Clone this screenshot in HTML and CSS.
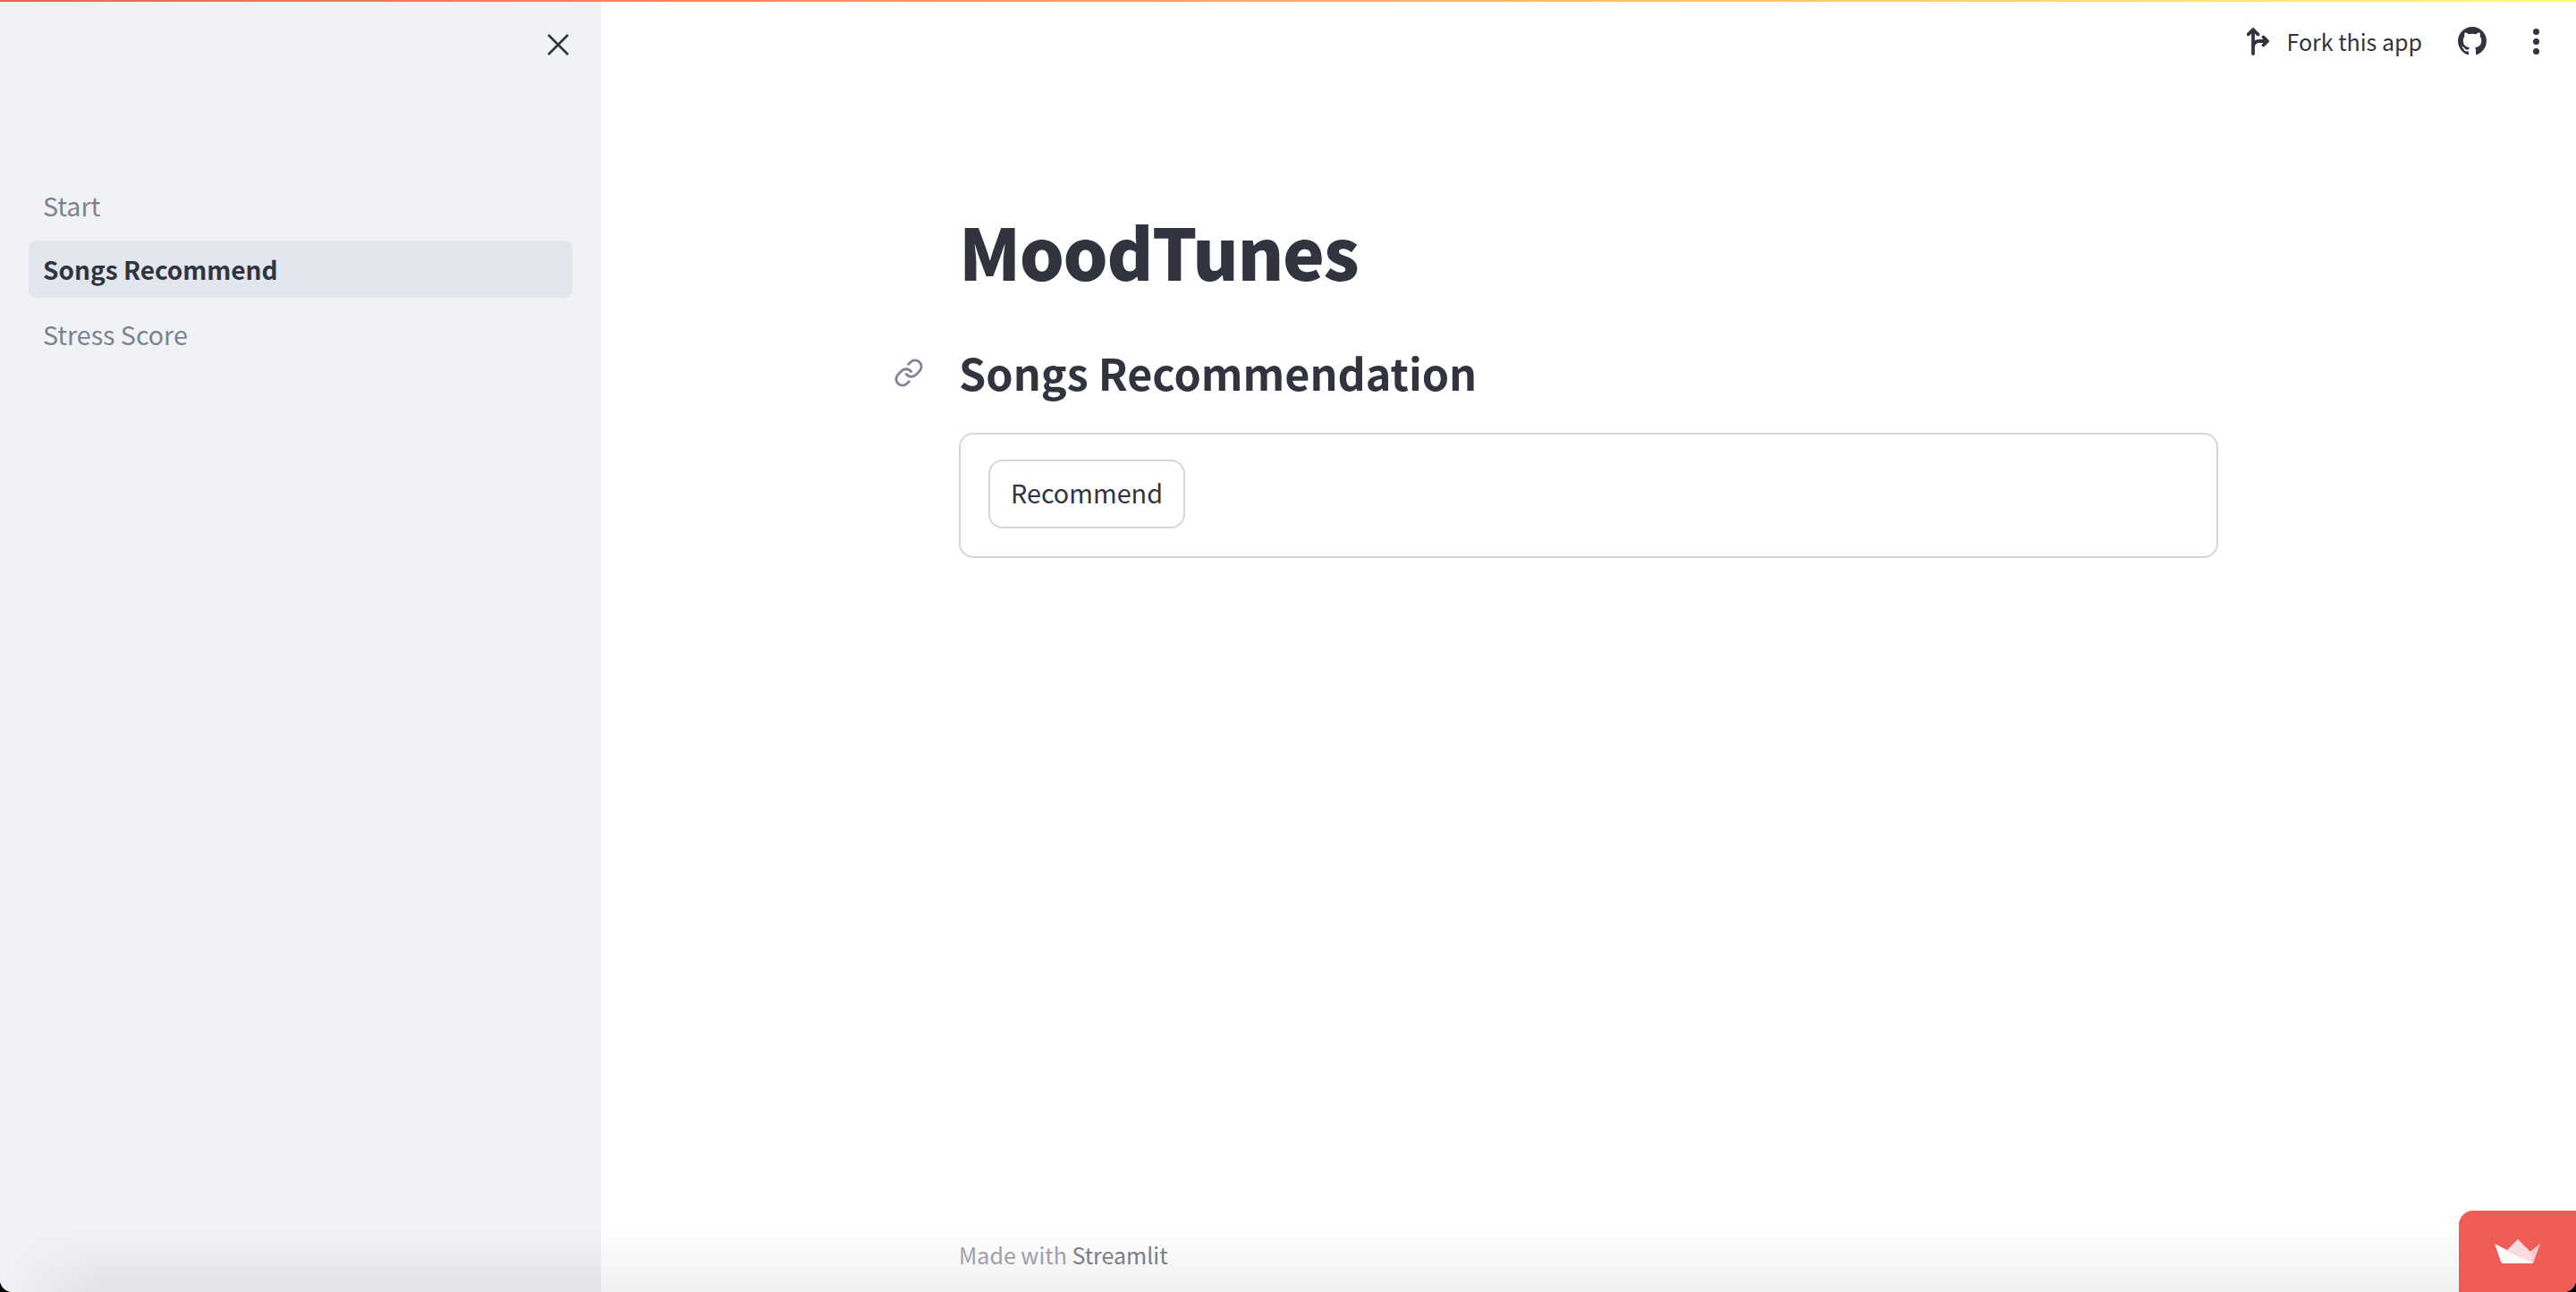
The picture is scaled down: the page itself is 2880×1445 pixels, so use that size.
FILE: index.html
```html
<!DOCTYPE html>
<html lang="en">
<head>
    <meta charset="UTF-8">
    <title>MoodTunes</title>
    <link rel="stylesheet" href="styles.css">
</head>
<body>
    <div class="app">
        <div class="top-line"></div>
        <div class="columns">
            <aside class="sidebar">
                <div class="sidebar-head">
                    <svg class="close-icon" viewBox="0 0 24 24" fill="none" stroke="#31333f" stroke-width="2.6"><path d="M1 1L23 23M23 1L1 23"/></svg>
                </div>
                <nav class="nav">
                    <a class="nav-item">Start</a>
                    <a class="nav-item active">Songs Recommend</a>
                    <a class="nav-item">Stress Score</a>
                </nav>
            </aside>
            <main class="main">
                <header class="toolbar">
                    <div class="fork">
                        <svg class="fork-icon" viewBox="0 0 26 32" fill="none" stroke="#31333f" stroke-width="3.8" stroke-linecap="round" stroke-linejoin="round"><path d="M7 30V3M1.5 8.5L7 3L12.500 8.500M7 23C7 18 10 16 14 16H22M18.500 11.500L23 16L18.500 20.500"/></svg>
                        <span>Fork this app</span>
                    </div>
                    <svg class="github-icon" viewBox="0 0 16 16" fill="#31333f"><path d="M8 0C3.580 0 0 3.580 0 8c0 3.540 2.290 6.530 5.470 7.590.4.070.55-.17.55-.38 0-.19-.01-.82-.01-1.490-2.010.37-2.530-.49-2.690-.94-.09-.23-.48-.94-.82-1.130-.28-.15-.68-.52-.01-.53.63-.01 1.080.58 1.230.82.72 1.210 1.870.87 2.330.66.070-.52.280-.87.510-1.070-1.780-.2-3.640-.89-3.640-3.950 0-.87.310-1.590.820-2.150-.08-.2-.36-1.020.08-2.120 0 0 .67-.21 2.200.82.640-.18 1.320-.27 2-.27s1.360.09 2 .27c1.530-1.040 2.200-.82 2.200-.82.440 1.100.160 1.920.080 2.120.510.560.820 1.270.820 2.150 0 3.070-1.870 3.750-3.650 3.950.290.250.540.730.540 1.480 0 1.070-.010 1.930-.010 2.200 0 .21.150.46.550.38A8.010 8.010 0 0 0 16 8c0-4.420-3.580-8-8-8z"/></svg>
                    <div class="dots"><i></i><i></i><i></i></div>
                </header>
                <section class="content">
                    <h1 class="title">MoodTunes</h1>
                    <h2 class="subtitle">
                        <svg class="link-icon" viewBox="0 0 24 24" fill="none" stroke="#808495" stroke-width="2" stroke-linecap="round" stroke-linejoin="round"><path d="M10 13a5 5 0 0 0 7.540.54l3-3a5 5 0 0 0-7.070-7.070l-1.720 1.710"/><path d="M14 11a5 5 0 0 0-7.540-.54l-3 3a5 5 0 0 0 7.070 7.070l1.710-1.710"/></svg>
                        Songs Recommendation
                    </h2>
                    <div class="card">
                        <button class="btn" type="button">Recommend</button>
                    </div>
                </section>
                <footer class="footer">Made with <span class="footer-link">Streamlit</span></footer>
            </main>
        </div>
        <div class="bottom-shade"></div>
        <div class="badge">
            <svg class="boat" viewBox="0 0 52 28">
                <path fill="#f8c6cd" d="M26 24L51 5L43 27Z"/>
                <path fill="#fadbe2" d="M26 0L40 14L43 27L14 12Z"/>
                <path fill="#fdfafa" d="M0 5L43 27H9Q8 27 7 25Z"/>
            </svg>
        </div>
    </div>
</body>
</html>
```

FILE: styles.css
```css
html, body {
    margin: 0;
    padding: 0;
    height: 100%;
    background: #000;
    overflow: hidden;
}
body {
    font-family: "Noto Sans CJK SC", "Noto Sans", sans-serif;
    color: #31333f;
}
.app {
    position: relative;
    height: 100vh;
    display: flex;
    flex-direction: column;
    background: #fff;
    border-radius: 0 0 14px 14px;
    overflow: hidden;
}
.top-line {
    height: 2px;
    flex: none;
    background: linear-gradient(90deg, #f0605a, #fff27f 98%);
}
.columns {
    flex: 1;
    display: flex;
    min-height: 0;
}
.sidebar {
    width: 672px;
    flex: none;
    background: #f0f2f6;
    padding: 0 32px;
    box-sizing: border-box;
}
.sidebar-head {
    height: 195px;
    display: flex;
    justify-content: flex-end;
    padding: 36px 4px 0 0;
    box-sizing: border-box;
}
.close-icon {
    width: 24px;
    height: 24px;
}
.nav {
    display: flex;
    flex-direction: column;
    gap: 8px;
}
.nav-item {
    height: 64px;
    display: flex;
    align-items: center;
    padding-left: 16px;
    border-radius: 8px;
    font-size: 28.6px;
    color: #7f818c;
}
.nav-item.active {
    background: #e2e7ef;
    color: #31333f;
    font-size: 28px;
    font-weight: 700;
}
.main {
    flex: 1;
    min-width: 0;
    display: flex;
    flex-direction: column;
}
.toolbar {
    display: flex;
    justify-content: flex-end;
    align-items: center;
    height: 88px;
    padding-right: 41px;
    box-sizing: border-box;
}
.fork {
    display: flex;
    align-items: center;
    gap: 18px;
    font-size: 25px;
}
.fork-icon {
    width: 26px;
    height: 32px;
}
.github-icon {
    width: 32px;
    height: 32px;
    margin-left: 40px;
}
.dots {
    display: flex;
    flex-direction: column;
    gap: 4px;
    margin-left: 52px;
}
.dots i {
    display: block;
    width: 7px;
    height: 7px;
    border-radius: 50%;
    background: #31333f;
}
.content {
    flex: 1;
    width: 1408px;
    margin-left: 400px;
}
.title {
    margin: 135px 0 0;
    font-size: 79px;
    line-height: 110px;
    font-weight: 900;
    letter-spacing: -1.5px;
}
.subtitle {
    position: relative;
    margin: 41px 0 0;
    font-size: 48.5px;
    line-height: 80px;
    font-weight: 700;
}
.link-icon {
    position: absolute;
    left: -73px;
    top: 24px;
    width: 34px;
    height: 34px;
}
.card {
    margin-top: 28px;
    height: 140px;
    padding: 28px 31px;
    box-sizing: border-box;
    border: 2px solid #d6d6d8;
    border-radius: 16px;
    display: flex;
    align-items: flex-start;
}
.btn {
    width: 220px;
    height: 77px;
    padding: 0 0 5px;
    border: 2px solid #d6d6d8;
    border-radius: 16px;
    background: #fff;
    color: #31333f;
    font-family: inherit;
    font-size: 28.8px;
}
.footer {
    height: 60px;
    width: 1408px;
    margin-left: 400px;
    font-size: 25px;
    color: #a4a5ad;
}
.footer-link {
    color: #7f818c;
}
.bottom-shade {
    position: absolute;
    left: 0;
    right: 0;
    bottom: 0;
    height: 70px;
    background: linear-gradient(180deg, rgba(0, 0, 0, 0), rgba(0, 0, 0, 0.06));
    -webkit-mask-image: linear-gradient(90deg, transparent, #000 110px);
    mask-image: linear-gradient(90deg, transparent, #000 110px);
    pointer-events: none;
}
.badge {
    position: absolute;
    right: 0;
    bottom: 0;
    width: 131px;
    height: 91px;
    background: #ef5b55;
    border-top-left-radius: 16px;
    display: flex;
    align-items: center;
    justify-content: center;
}
.boat {
    width: 52px;
    height: 28px;
}
```
